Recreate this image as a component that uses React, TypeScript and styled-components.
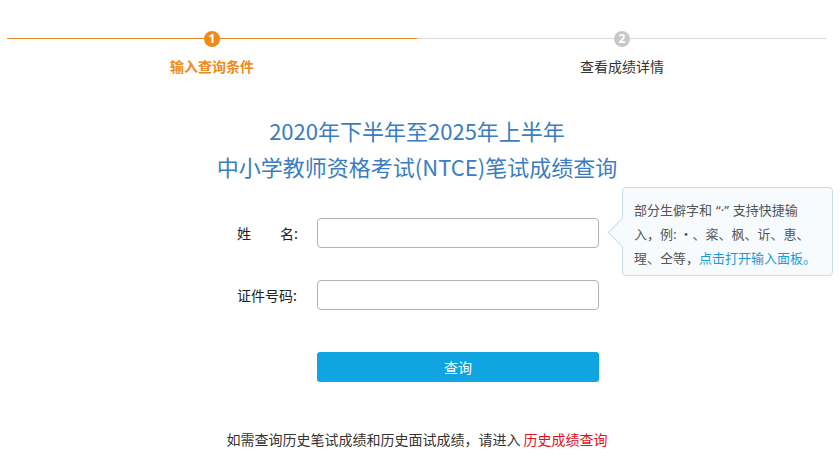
import React from "react";
import styled, { createGlobalStyle } from "styled-components";

const GlobalStyle = createGlobalStyle`
  html, body {
    margin: 0;
    padding: 0;
    background: #ffffff;
  }
  body {
    font-family: "Noto Sans CJK SC", "Noto Sans", sans-serif;
    font-size: 13px;
    color: #333333;
  }
  * { box-sizing: border-box; }
`;

const Page = styled.div`
  width: 820px;
  margin-left: 7px;
  padding-top: 31px;
  display: flex;
  flex-direction: column;
`;

const Steps = styled.div`
  display: flex;
`;

const Step = styled.div`
  flex: 1;
  display: flex;
  flex-direction: column;
  align-items: center;
`;

const StepTrack = styled.div<{ $active?: boolean }>`
  width: 100%;
  height: 16px;
  display: flex;
  align-items: center;
  justify-content: center;
  position: relative;
  &::before {
    content: "";
    position: absolute;
    left: 0;
    right: 0;
    top: 7px;
    height: 1px;
    background: ${(p) => (p.$active ? "#e8892b" : "#dcdcdc")};
  }
`;

const StepDot = styled.span<{ $active?: boolean }>`
  position: relative;
  width: 16px;
  height: 16px;
  border-radius: 50%;
  background: ${(p) => (p.$active ? "#f08a14" : "#c8c8c8")};
  color: #fff;
  font-family: "Noto Sans", sans-serif;
  font-size: 12px;
  font-weight: 700;
  line-height: 16px;
  text-align: center;
`;

const StepLabel = styled.div<{ $active?: boolean }>`
  margin-top: 9px;
  font-size: 14px;
  line-height: 20px;
  font-weight: ${(p) => (p.$active ? 700 : 400)};
  color: ${(p) => (p.$active ? "#ee8a1e" : "#333333")};
`;

const Title = styled.h1`
  margin: 36px 0 0;
  font-size: 22px;
  line-height: 36px;
  font-weight: 400;
  color: #3b7dc0;
  text-align: center;
`;

const Form = styled.div`
  margin: 34px 0 0 230px;
  width: 362px;
  display: flex;
  flex-direction: column;
  gap: 32px;
`;

const Row = styled.div`
  display: flex;
  align-items: center;
`;

const Label = styled.label`
  width: 61px;
  margin-right: 19px;
  display: flex;
  justify-content: space-between;
  font-size: 14px;
  line-height: 20px;
  color: #222;
`;

const Field = styled.div`
  position: relative;
  width: 282px;
`;

const Input = styled.input`
  width: 282px;
  height: 30px;
  border: 1px solid #b3b3b3;
  border-radius: 4px;
  padding: 0 8px;
  font-size: 14px;
  font-family: inherit;
  outline: none;
  background: #fff;
`;

const Tip = styled.div`
  position: absolute;
  left: 305px;
  top: -31px;
  width: 211px;
  height: 89px;
  padding: 10px 0 0 11px;
  background: #f7fbfe;
  border: 1px solid #c9dcea;
  border-radius: 4px;
  font-size: 13px;
  line-height: 24px;
  color: #555555;
  white-space: nowrap;
  &::before {
    content: "";
    position: absolute;
    left: -11px;
    top: 34px;
    width: 20px;
    height: 20px;
    background: #f7fbfe;
    border-left: 1px solid #c9dcea;
    border-bottom: 1px solid #c9dcea;
    transform: rotate(45deg);
  }
`;

const TipText = styled.div`
  position: relative;
`;

const Quote = styled.span`
  font-family: "Noto Sans", sans-serif;
  margin: 0 4px;
`;

const TipLink = styled.a`
  color: #1b9ad6;
  text-decoration: none;
  cursor: pointer;
`;

const ButtonRow = styled.div`
  display: flex;
  padding-left: 80px;
  margin-top: 10px;
`;

const Button = styled.button`
  width: 282px;
  height: 30px;
  border: none;
  border-radius: 3px;
  background: #10a4e0;
  color: #fff;
  font-family: inherit;
  font-size: 14px;
  cursor: pointer;
`;

const Footer = styled.p`
  margin: 47px 0 0;
  text-align: center;
  font-size: 14px;
  line-height: 20px;
  color: #333333;
`;

const RedLink = styled.a`
  color: #e2101a;
  text-decoration: none;
  cursor: pointer;
`;

export default function App() {
  return (
    <>
      <GlobalStyle />
      <Page>
        <Steps>
          <Step>
            <StepTrack $active>
              <StepDot $active>1</StepDot>
            </StepTrack>
            <StepLabel $active>输入查询条件</StepLabel>
          </Step>
          <Step>
            <StepTrack>
              <StepDot>2</StepDot>
            </StepTrack>
            <StepLabel>查看成绩详情</StepLabel>
          </Step>
        </Steps>

        <Title>
          2020年下半年至2025年上半年
          <br />
          中小学教师资格考试(NTCE)笔试成绩查询
        </Title>

        <Form>
          <Row>
            <Label>
              <span>姓</span>
              <span>名:</span>
            </Label>
            <Field>
              <Input type="text" />
              <Tip>
                <TipText>
                  部分生僻字和<Quote>“·”</Quote>支持快捷输
                  <br />
                  入，例: ·、粢、枫、䜣、恵、
                  <br />
                  瑆、仝等，<TipLink>点击打开输入面板。</TipLink>
                </TipText>
              </Tip>
            </Field>
          </Row>
          <Row>
            <Label>
              <span>证件号码:</span>
            </Label>
            <Field>
              <Input type="text" />
            </Field>
          </Row>
          <ButtonRow>
            <Button>查询</Button>
          </ButtonRow>
        </Form>

        <Footer>
          如需查询历史笔试成绩和历史面试成绩，请进入 <RedLink>历史成绩查询</RedLink>
        </Footer>
      </Page>
    </>
  );
}
